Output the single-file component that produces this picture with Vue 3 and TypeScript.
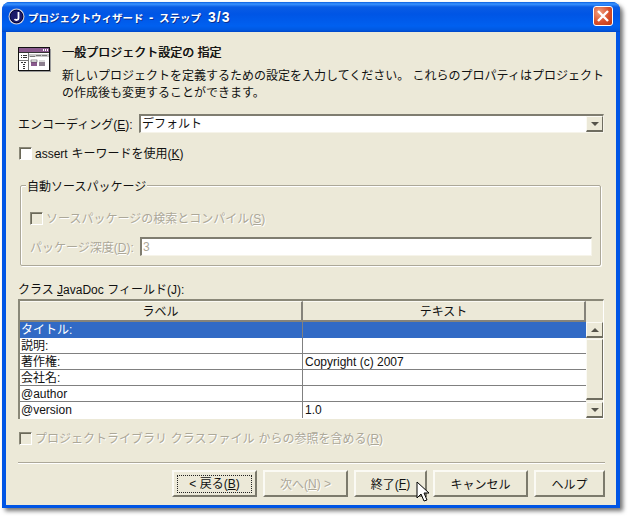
<script setup lang="ts">
const rows: { label: string; text: string; selected?: boolean }[] = [
  { label: 'タイトル:', text: '', selected: true },
  { label: '説明:', text: '' },
  { label: '著作権:', text: 'Copyright (c) 2007' },
  { label: '会社名:', text: '' },
  { label: '@author', text: '' },
  { label: '@version', text: '1.0' },
]
</script>

<template>
  <div class="page">
    <div class="window">
      <div class="titlebar">
        <svg class="app-icon" width="17" height="17" viewBox="0 0 17 17">
          <circle cx="8.5" cy="8.5" r="8" fill="#c8c8d8" />
          <circle cx="8.5" cy="8.5" r="6.4" fill="#1a1a6a" stroke="#000030" stroke-width="1" />
          <path d="M10.5 4v6.2c0 1.8-2.6 2.4-4 1" fill="none" stroke="#fff" stroke-width="1.8" />
        </svg>
        <span class="title">プロジェクトウィザード<span class="latin"> - </span>ステップ<span class="latin ratio"> 3/3</span></span>
        <div class="close">
          <svg width="14" height="14" viewBox="0 0 14 14">
            <path d="M2 2l10 10M12 2L2 12" stroke="#fff" stroke-width="2.4" />
          </svg>
        </div>
      </div>

      <div class="body">
        <div class="header">
          <svg class="wiz-icon" width="33" height="25" viewBox="0 0 33 25">
            <rect x="0.5" y="0.5" width="31" height="23" fill="#fff" stroke="#111" />
            <rect x="32" y="2" width="1" height="23" fill="#9a9a9a" />
            <rect x="1" y="24" width="32" height="1" fill="#9a9a9a" />
            <rect x="1" y="1" width="30" height="4" fill="#8a5a8e" />
            <path d="M25 2h1v2h-1zM27 2h1v2h-1zM29 2h1v2h-1z" fill="#fff" />
            <rect x="1" y="5" width="30" height="1" fill="#333" />
            <rect x="10" y="6" width="1" height="17" fill="#777" />
            <rect x="1" y="13" width="9" height="1" fill="#777" />
            <path d="M3 8h1v1H3zM5 8h4v1H5zM3 10h1v1H3zM5 10h4v1H5zM3 15h2v1H3zM6 15h2v1H6zM5 17h2v1H5zM5 19h2v1H5zM5 21h2v1H5z" fill="#333" />
            <rect x="11" y="7" width="20" height="3" fill="#c8c8c8" />
            <path d="M12 10h5v-1h-5zM18 8h5v1h-5zM24 8h5v1h-5z" fill="#777" />
            <rect x="13" y="13" width="6" height="6" fill="#8a5a8e" />
            <rect x="13" y="13" width="6" height="2" fill="#fff" stroke="#333" stroke-width=".5" />
            <rect x="21" y="13" width="6" height="6" fill="#8d7f8f" />
            <rect x="21" y="13" width="6" height="2" fill="#ddd" />
          </svg>
          <div class="head-text">
            <div class="head-title">一般プロジェクト設定の 指定</div>
            <div class="head-desc">新しいプロジェクトを定義するための設定を入力してください。 これらのプロパティはプロジェクトの作成後も変更することができます。</div>
          </div>
        </div>

        <div class="encoding">
          <span class="enc-label">エンコーディング(<u>E</u>):</span>
          <div class="field combo">
            <span class="combo-value">デフォルト</span>
            <div class="arrow-btn"><i class="tri down"></i></div>
          </div>
        </div>

        <label class="check-row assert">
          <span class="check"></span>
          <span class="nudge">assert キーワードを使用(<u>K</u>)</span>
        </label>

        <div class="group">
          <div class="legend">自動ソースパッケージ</div>
          <div class="check-row disabled">
            <span class="check off"></span>
            <span class="nudge">ソースパッケージの検索とコンパイル(<u>S</u>)</span>
          </div>
          <div class="depth disabled">
            <span class="depth-label">パッケージ深度(<u>D</u>):</span>
            <div class="field depth-field">3</div>
          </div>
        </div>

        <div class="table-label">クラス <u>J</u>avaDoc フィールド(J):</div>
        <div class="table">
          <div class="thead">
            <div class="th col1">ラベル</div>
            <div class="th col2">テキスト</div>
          </div>
          <div class="tbody">
            <div class="rows">
              <div v-for="r in rows" :key="r.label" class="row" :class="{ selected: r.selected }">
                <div class="cell col1">{{ r.label }}</div>
                <div class="cell col2">{{ r.text }}</div>
              </div>
            </div>
            <div class="scrollbar">
              <div class="arrow-btn sb"><i class="tri up"></i></div>
              <div class="thumb"></div>
              <div class="arrow-btn sb"><i class="tri down"></i></div>
            </div>
          </div>
        </div>

        <div class="check-row disabled lib">
          <span class="check off"></span>
          <span class="nudge">プロジェクトライブラリ クラスファイル からの参照を含める(<u>R</u>)</span>
        </div>

        <div class="sep"></div>

        <div class="buttons">
          <button class="btn back"><span class="focus">&lt; 戻る(<u>B</u>)</span></button>
          <button class="btn next" disabled>次へ(<u>N</u>) &gt;</button>
          <button class="btn finish">終了(<u>F</u>)</button>
          <button class="btn cancel">キャンセル</button>
          <button class="btn help">ヘルプ</button>
        </div>
      </div>

      <svg class="cursor" width="14" height="22" viewBox="0 0 14 22">
        <path d="M1 1v16l4-4 3 7 3-1-3-7h5z" fill="#fff" stroke="#000" stroke-width="1" />
      </svg>
    </div>
  </div>
</template>

<style>
html, body { margin: 0; background: #fff; }
</style>

<style scoped>
.page {
  width: 628px;
  height: 517px;
  padding: 2px 0 0 2px;
  box-sizing: border-box;
  overflow: hidden;
  font-family: "Liberation Sans", "Noto Sans CJK JP", sans-serif;
  font-size: 12px;
  color: #111;
}
.window {
  position: relative;
  width: 618px;
  height: 506px;
  display: flex;
  flex-direction: column;
  border-radius: 8px 8px 0 0;
  background: #0055e5;
  box-shadow: 3px 3px 4px rgba(0, 0, 0, .55);
}
.titlebar {
  height: 30px;
  flex: none;
  display: flex;
  align-items: center;
  padding: 0 7px 0 6px;
  border-radius: 8px 8px 0 0;
  background: linear-gradient(#0a5fe0 0, #3a93ff 2px, #0a5ce4 5px, #0055e5 12px, #0060f0 24px, #0058e0 28px, #0046c8 30px);
  color: #fff;
  box-sizing: border-box;
}
.app-icon { flex: none; margin-top: -2px; }
.title {
  margin-left: 3px;
  margin-top: -1px;
  font-weight: 700;
  font-size: 10.5px;
  white-space: nowrap;
  text-shadow: 1px 1px 0 #0a2f90;
}
.latin {
  font-size: 13px;
  word-spacing: 2px;
}
.ratio {
  letter-spacing: 1px;
  font-size: 14px;
}
.close {
  margin-left: auto;
  width: 20px;
  height: 20px;
  margin-top: -3px;
  box-sizing: border-box;
  border: 1px solid #fff;
  border-radius: 3px;
  background: radial-gradient(circle at 30% 30%, #f0a080, #d8502c 55%, #c03810);
  display: flex;
  align-items: center;
  justify-content: center;
}
.body {
  flex: 1;
  margin: 0 4px 3px 4px;
  padding: 12px 12px 0;
  background: #ece9d8;
  display: flex;
  flex-direction: column;
  min-height: 0;
}
.header { display: flex; }
.wiz-icon { flex: none; margin-top: 3px; }
.head-text { margin-left: 11px; }
.head-title { line-height: 16px; height: 16px; padding-top: 1px; text-shadow: .4px 0 0 #111; }
.head-desc { margin-top: 7px; line-height: 17px; width: 546px; }
.encoding {
  display: flex;
  align-items: center;
  margin-top: 12px;
  height: 19px;
}
.enc-label { width: 121px; flex: none; white-space: nowrap; }
.field {
  box-sizing: border-box;
  height: 19px;
  background: #fff;
  border-top: 2px solid #7f7d70;
  border-left: 2px solid #7f7d70;
  border-bottom: 1px solid #f6f4ea;
  border-right: 1px solid #f6f4ea;
}
.combo {
  width: 465px;
  display: flex;
  align-items: center;
  justify-content: space-between;
}
.combo-value { padding-left: 1px; line-height: 14px; }
.arrow-btn {
  box-sizing: border-box;
  width: 17px;
  height: 16px;
  background: #ece9d8;
  border-top: 1px solid #fbfaf4;
  border-left: 1px solid #fbfaf4;
  border-right: 1px solid #6f6d60;
  border-bottom: 2px solid #6f6d60;
  display: flex;
  align-items: center;
  justify-content: center;
}
.tri {
  display: block;
  width: 0;
  height: 0;
  border-left: 4px solid transparent;
  border-right: 4px solid transparent;
}
.tri.down { border-top: 4px solid #55534a; }
.tri.up { border-bottom: 4px solid #55534a; }
.check-row {
  display: flex;
  align-items: center;
  height: 14px;
  white-space: nowrap;
}
.check {
  box-sizing: border-box;
  width: 13px;
  height: 13px;
  flex: none;
  margin-left: 1px;
  margin-right: 3px;
  background: #fff;
  border-top: 1px solid #8a8878;
  border-left: 1px solid #8a8878;
  border-right: 1px solid #fff;
  border-bottom: 1px solid #fff;
  box-shadow: inset 1px 1px 0 #6a6858;
}
.check.off { background: #ece9d8; }
.nudge { margin-top: -2px; word-spacing: .5px; }
.assert { margin-top: 13px; }
.group {
  position: relative;
  margin: 25px 3px 0 2px;
  box-sizing: border-box;
  height: 81px;
  padding: 25px 8px 0 8px;
  border: 1px solid #aca899;
  box-shadow: 1px 1px 0 #fff, inset 1px 1px 0 #fff;
  border-radius: 2px;
}
.legend {
  position: absolute;
  left: 5px;
  top: -7px;
  padding: 0 1px;
  line-height: 16px;
  background: #ece9d8;
}
.disabled {
  color: #aca899;
  text-shadow: 1px 1px 0 #fff;
}
.depth {
  display: flex;
  align-items: center;
  margin-top: 12px;
}
.depth-label { width: 111px; box-sizing: border-box; padding-left: 1px; flex: none; white-space: nowrap; }
.depth-field {
  width: 453px;
  line-height: 16px;
  padding-left: 1px;
  text-shadow: none;
  color: #aca899;
}
.table-label { margin-top: 16px; line-height: 16px; }
.table {
  margin-top: 1px;
  box-sizing: border-box;
  width: 586px;
  height: 120px;
  background: #fff;
  border-top: 2px solid #8a8878;
  border-left: 2px solid #8a8878;
  border-right: 1px solid #fff;
  display: flex;
  flex-direction: column;
}
.thead {
  display: flex;
  height: 21px;
  flex: none;
  background: #ece9d8;
}
.th {
  box-sizing: border-box;
  text-align: center;
  line-height: 20px;
  border-top: 1px solid #fbfaf4;
  border-right: 2px solid #85837a;
  border-bottom: 2px solid #85837a;
}
.col1 { width: 283px; flex: none; }
.col2 { width: 283px; flex: none; }
.tbody { display: flex; }
.rows { width: 566px; flex: none; }
.row { display: flex; height: 16px; }
.cell {
  box-sizing: border-box;
  line-height: 16px;
  padding-left: 1px;
  border-bottom: 1px solid #808080;
  white-space: nowrap;
  overflow: hidden;
}
.row .col1 { border-right: 1px solid #808080; }
.row:last-child .cell { border-bottom: none; }
.row .col2 { padding-left: 2px; }
.row.selected .cell { background: #316ac5; color: #fff; border-bottom-color: #316ac5; }
.scrollbar {
  width: 17px;
  flex: none;
  box-sizing: border-box;
  display: flex;
  flex-direction: column;
  background: #f4f2e6;
}
.sb { width: 17px; height: 16px; }
.thumb {
  flex: none;
  height: 61px;
  margin: 1px 0 2px;
  box-sizing: border-box;
  background: #ece9d8;
  border-top: 1px solid #fbfaf4;
  border-left: 1px solid #fbfaf4;
  border-right: 1px solid #6f6d60;
  border-bottom: 2px solid #6f6d60;
}
.lib { margin-top: 12px; }
.sep {
  margin-top: 17px;
  height: 1px;
  background: #aca899;
  border-bottom: 1px solid #fff;
  flex: none;
  width: 587px;
}
.buttons {
  margin-top: 6px;
  display: flex;
  gap: 6px;
  padding-left: 154px;
}
.btn {
  box-sizing: border-box;
  height: 27px;
  padding: 0;
  font: inherit;
  color: #111;
  background: #ece9d8;
  border-top: 2px solid #fbfaf4;
  border-left: 2px solid #fbfaf4;
  border-right: 2px solid #7c7a6c;
  border-bottom: 2px solid #7c7a6c;
  display: flex;
  align-items: center;
  justify-content: center;
  flex: none;
}
.btn:disabled { color: #aca899; text-shadow: 1px 1px 0 #fff; }
.back { width: 85px; }
.next { width: 85px; }
.finish { width: 73px; }
.cancel { width: 95px; }
.help { width: 71px; }
.focus {
  box-sizing: border-box;
  width: 75px;
  height: 18px;
  line-height: 16px;
  border: 1px dotted #222;
  text-align: center;
}
.cursor {
  position: absolute;
  left: 414px;
  top: 479px;
}
</style>
